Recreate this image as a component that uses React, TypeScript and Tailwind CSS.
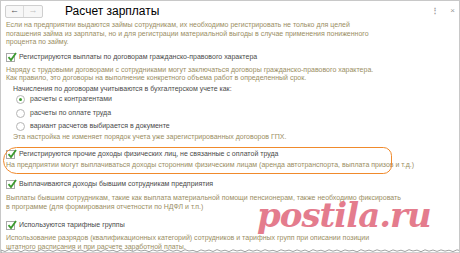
import React from 'react';

const Check = () => (
  <span className="relative inline-flex h-[9px] w-[9px] shrink-0 items-center justify-center border border-[#a9a9a9] bg-white">
    <svg viewBox="0 0 10 10" className="absolute -top-[2px] left-0 h-[10px] w-[10px]">
      <path d="M1.5 5.2 L4 8 L9 1" fill="none" stroke="#3c9a2f" strokeWidth="1.8" />
    </svg>
  </span>
);

const Radio = ({ on }: { on?: boolean }) => (
  <span className="inline-flex h-[9px] w-[9px] shrink-0 items-center justify-center rounded-full border border-[#b5b5b5] bg-white">
    {on && <span className="h-[3px] w-[3px] rounded-full bg-[#3c9a2f]" />}
  </span>
);

function CheckRow({ label }: { label: string }) {
  return (
    <div className="flex h-[10px] items-center gap-[4px] pl-[5px] text-[#4a4a4a]">
      <Check />
      <span>{label}</span>
    </div>
  );
}

function Note({ lines, className = '' }: { lines: string[]; className?: string }) {
  return (
    <div className={`text-[#9a8e63] leading-[8.5px] ${className}`}>
      {lines.map((l, i) => (
        <div key={i}>{l}</div>
      ))}
    </div>
  );
}

export default function App() {
  return (
    <div
      className="relative h-[253px] w-[460px] overflow-hidden border-x border-t border-[#c8c8c8] bg-white text-[7px]"
      style={{ fontFamily: '"Liberation Sans", Arial, sans-serif' }}
    >
      {/* header */}
      <div className="flex h-[20px] items-center">
        <div className="ml-[4px] flex h-[13px] overflow-hidden rounded-[2px] border border-[#cfcfcf] bg-[#f7f7f7]">
          <span className="flex w-[18px] items-center justify-center border-r border-[#dadada] text-[9px] text-[#555]">←</span>
          <span className="flex w-[18px] items-center justify-center text-[9px] text-[#c0c0c0]">→</span>
        </div>
        <span className="ml-[22px] text-[12px] text-black">Расчет зарплаты</span>
        <span className="ml-auto mr-[11px] text-[8px] font-bold text-[#9a9a9a]">⋮</span>
        <span className="mr-[4px] text-[8px] text-[#9a9a9a]">×</span>
      </div>

      <Note
        className="pl-[5px]"
        lines={[
          'Если на предприятии выдаются займы сотрудникам, их необходимо регистрировать не только для целей',
          'погашения займа из зарплаты, но и для регистрации материальной выгоды в случае применения пониженного',
          'процента по займу.',
        ]}
      />

      <div className="mt-[6px]">
        <CheckRow label="Регистрируются выплаты по договорам гражданско-правового характера" />
      </div>

      <Note
        className="mt-[3px] pl-[5px]"
        lines={[
          'Наряду с трудовыми договорами с сотрудниками могут заключаться договоры гражданско-правового характера.',
          'Как правило, это договоры на выполнение конкретного объема работ в определенный срок.',
        ]}
      />

      <div className="mt-[1px] pl-[12px] text-[#4a4a4a]">
        <div className="h-[9px] leading-[9px]">Начисления по договорам учитываются в бухгалтерском учете как:</div>
        <div className="mt-[2px] flex flex-col gap-[3.5px] pl-[3px]">
          <div className="flex h-[10px] items-center gap-[5px]">
            <Radio on />
            <span>расчеты с контрагентами</span>
          </div>
          <div className="flex h-[10px] items-center gap-[5px]">
            <Radio />
            <span>расчеты по оплате труда</span>
          </div>
          <div className="flex h-[10px] items-center gap-[5px]">
            <Radio />
            <span>вариант расчетов выбирается в документе</span>
          </div>
        </div>
        <div className="h-[9px] leading-[9px] text-[#9a8e63]">
          Эта настройка не изменяет порядок учета уже зарегистрированных договоров ГПХ.
        </div>
      </div>

      {/* highlighted block */}
      <div className="relative mt-[9px]">
        <CheckRow label="Регистрируются прочие доходы физических лиц, не связанные с оплатой труда" />
        <Note
          className="mt-[1px] pl-[5px]"
          lines={['На предприятии могут выплачиваться доходы сторонним физическим лицам (аренда автотранспорта, выплата призов и т.д.)']}
        />
        <div className="pointer-events-none absolute -top-[3px] left-[2px] h-[27px] w-[389px] rounded-l-[14px] rounded-r-[9px] border-[1.5px] border-[#f08a2c]" />
      </div>

      <div className="mt-[10px]">
        <CheckRow label="Выплачиваются доходы бывшим сотрудникам предприятия" />
      </div>
      <Note
        className="mt-[5px] pl-[5px]"
        lines={[
          'Выплаты бывшим сотрудникам, такие как выплата материальной помощи пенсионерам, также необходимо фиксировать',
          'в программе (для формирования отчетности по НДФЛ и т.п.)',
        ]}
      />

      <div className="mt-[9px]">
        <CheckRow label="Используются тарифные группы" />
      </div>
      <Note
        className="mt-[4px] pl-[5px]"
        lines={[
          'Использование разрядов (квалификационных категорий) сотрудников и тарифных групп при описании позиции',
          'штатного расписания и при расчете заработной платы.',
        ]}
      />

      {/* watermark */}
      <div
        className="pointer-events-none absolute left-[256px] top-[197px] text-[34px] font-bold italic leading-none tracking-[-1px] text-[#e0667a] opacity-85"
        style={{ fontFamily: '"DejaVu Serif", serif' }}
      >
        postila.ru
      </div>

      {/* torn edge */}
      <svg className="absolute bottom-0 left-0 h-[5px] w-[460px]" viewBox="0 0 460 5" preserveAspectRatio="none">
        <path
          d="M0 2 L4 3.5 L8 1.5 L12 3 L16 2 L20 3.8 L24 1.8 L28 3 L32 2.2 L36 3.6 L40 1.6 L44 3.2 L48 2 L52 3.5 L56 1.8 L60 3 L64 2.4 L68 3.7 L72 1.7 L76 3.1 L80 2 L84 3.6 L88 1.9 L92 3.2 L96 2.1 L100 3.5 L104 1.6 L108 3 L112 2.3 L116 3.8 L120 1.8 L124 3.2 L128 2 L132 3.4 L136 1.7 L140 3 L144 2.2 L148 3.7 L152 1.9 L156 3.1 L160 2 L164 3.5 L168 1.8 L172 3.3 L176 2.1 L180 3.6 L184 1.7 L188 3 L192 2.4 L196 3.8 L200 1.9 L204 3.1 L208 2 L212 3.5 L216 1.6 L220 3.2 L224 2.2 L228 3.6 L232 1.8 L236 3 L240 2.1 L244 3.7 L248 1.9 L252 3.2 L256 2 L260 3.4 L264 1.7 L268 3.1 L272 2.3 L276 3.6 L280 1.8 L284 3 L288 2.1 L292 3.5 L296 1.9 L300 3.3 L304 2 L308 3.7 L312 1.7 L316 3.1 L320 2.2 L324 3.5 L328 1.8 L332 3.2 L336 2 L340 3.6 L344 1.9 L348 3 L352 2.3 L356 3.8 L360 1.7 L364 3.2 L368 2.1 L372 3.4 L376 1.8 L380 3.1 L384 2 L388 3.6 L392 1.9 L396 3.2 L400 2.2 L404 3.5 L408 1.7 L412 3 L416 2.1 L420 3.7 L424 1.8 L428 3.2 L432 2 L436 3.4 L440 1.9 L444 3.1 L448 2.2 L452 3.6 L456 1.8 L460 3 L460 5 L0 5 Z"
          fill="#ffffff"
          stroke="#8a8a8a"
          strokeWidth="0.8"
        />
      </svg>
    </div>
  );
}
